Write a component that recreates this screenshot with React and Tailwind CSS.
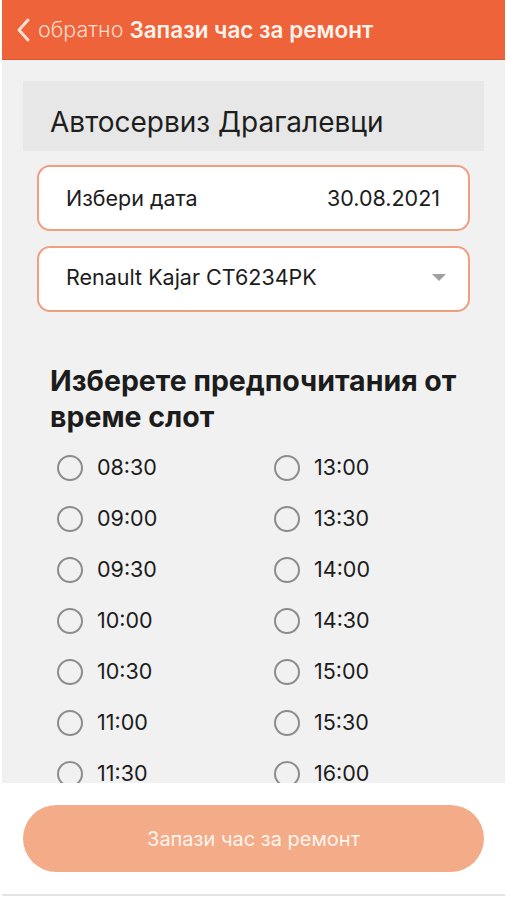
import React from "react";

const left = ["08:30", "09:00", "09:30", "10:00", "10:30", "11:00", "11:30"];
const right = ["13:00", "13:30", "14:00", "14:30", "15:00", "15:30", "16:00"];

function Slot({ t }) {
  return (
    <div className="flex items-center h-[51px]">
      <div className="w-[26px] h-[26px] rounded-full border-2 border-[#8c8c8c] shrink-0" />
      <span className="ml-[14px] text-[21.5px] text-[#1c1c1c]">{t}</span>
    </div>
  );
}

export default function App() {
  return (
    <div
      className="w-[507px] h-[900px] bg-white pl-[2px] pr-[2px] overflow-hidden"
      style={{ fontFamily: "Inter, 'Noto Sans', sans-serif" }}
    >
      <div className="flex flex-col h-[896px] border-b-2 border-[#e4e4e4]">
        <div className="h-[60px] bg-[#ee633a] border-b border-[#d85a33] flex items-center pl-[13px] shrink-0">
          <svg width="18" height="26" viewBox="0 0 18 26" fill="none" className="mr-[5px]">
            <path d="M13 3 L4 13 L13 23" stroke="#fbe2d6" strokeWidth="3" strokeLinecap="round" strokeLinejoin="round" />
          </svg>
          <span className="text-[21.5px] text-[#fbdccd] font-light">обратно</span>
          <span className="ml-[6px] text-[22.5px] text-[#fff3ec] font-semibold">Запази час за ремонт</span>
        </div>
        <div className="flex-1 bg-[#f1f1f1] overflow-hidden">
          <div className="mx-[21px] mt-[21px] h-[70px] bg-[#e7e7e7] flex items-center pl-[27px] pt-[12px]">
            <span className="text-[28px] text-[#1e1e1e]">Автосервиз Драгалевци</span>
          </div>
          <div className="mx-[35px] mt-[14px] h-[66px] bg-white border-2 border-[#ef9f80] rounded-[13px] flex items-center justify-between pl-[27px] pr-[28px]">
            <span className="text-[21.5px] text-[#1c1c1c]">Избери дата</span>
            <span className="text-[21.5px] text-[#1c1c1c]">30.08.2021</span>
          </div>
          <div className="mx-[35px] mt-[15px] h-[66px] bg-white border-2 border-[#ef9f80] rounded-[13px] flex items-center justify-between pl-[27px] pr-[22px] pb-[4px]">
            <span className="text-[21.5px] text-[#1c1c1c]">Renault Kajar CT6234PK</span>
            <svg width="14" height="7" viewBox="0 0 14 7">
              <path d="M0 0 L14 0 L7 7 Z" fill="#a0a0a0" />
            </svg>
          </div>
          <div className="pl-[48px] mt-[51px] text-[28.5px] font-bold leading-[36px] text-[#1c1c1c]">
            Изберете предпочитания от
            <br />
            време слот
          </div>
          <div className="flex pl-[55px] mt-[7px]">
            <div className="w-[217px] flex flex-col">
              {left.map((t) => (
                <Slot key={t} t={t} />
              ))}
            </div>
            <div className="flex flex-col">
              {right.map((t) => (
                <Slot key={t} t={t} />
              ))}
            </div>
          </div>
        </div>
        <div className="h-[111px] bg-white flex items-center justify-center shrink-0 px-[21px]">
          <div className="w-full h-[67px] rounded-full bg-[#f4ab87] flex items-center justify-center">
            <span className="text-[20px] text-[#fff4ee]">Запази час за ремонт</span>
          </div>
        </div>
      </div>
    </div>
  );
}
